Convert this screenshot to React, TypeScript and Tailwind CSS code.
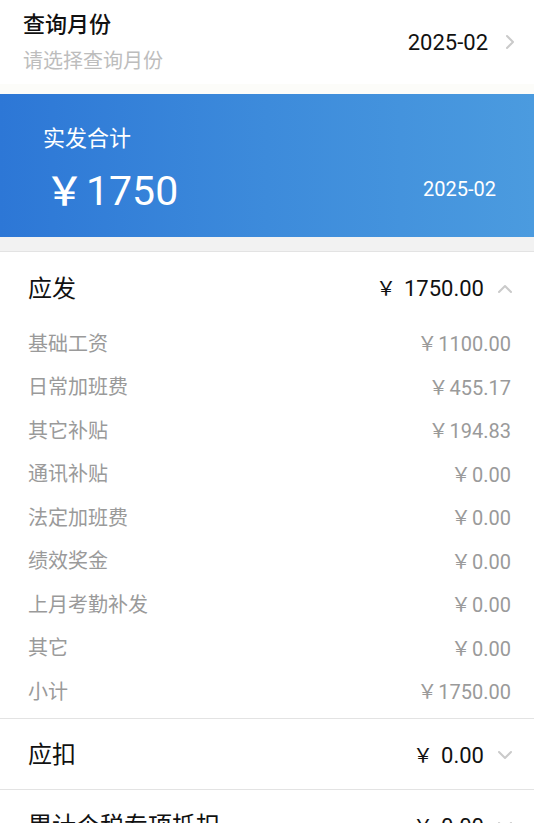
import React from "react";

const font = { fontFamily: "Roboto, 'Noto Sans CJK SC', 'Noto Sans', sans-serif" };

const earnings = [
  { label: "基础工资", value: "1100.00" },
  { label: "日常加班费", value: "455.17" },
  { label: "其它补贴", value: "194.83" },
  { label: "通讯补贴", value: "0.00" },
  { label: "法定加班费", value: "0.00" },
  { label: "绩效奖金", value: "0.00" },
  { label: "上月考勤补发", value: "0.00" },
  { label: "其它", value: "0.00" },
  { label: "小计", value: "1750.00" },
];

const yen = { fontFamily: "'Noto Sans CJK SC', sans-serif" };

function Chevron({ dir }: { dir: "right" | "up" | "down" }) {
  const pts =
    dir === "right" ? "5,2 11,8 5,14" : dir === "up" ? "2,11 8,5 14,11" : "2,5 8,11 14,5";
  return (
    <svg width="16" height="16" viewBox="0 0 16 16" className="shrink-0">
      <polyline points={pts} fill="none" stroke="#cacaca" strokeWidth="2" strokeLinecap="round" strokeLinejoin="round" />
    </svg>
  );
}

function SectionHead({ title, amount, open }: { title: string; amount: string; open: boolean }) {
  return (
    <div className="flex h-[70px] items-center justify-between pl-[28px] pr-[21px] pt-[3px]">
      <span className="text-[24px] text-[#111]">{title}</span>
      <div className="flex items-center gap-[13px]">
        <span className="text-[22px] text-[#111]">
          <span style={yen} className="mr-[8px] text-[20px]">￥</span>
          {amount}
        </span>
        <Chevron dir={open ? "up" : "down"} />
      </div>
    </div>
  );
}

export default function App() {
  return (
    <div className="h-[823px] w-[534px] overflow-hidden bg-white" style={font}>
      <div className="flex h-[84px] items-center justify-between pl-[23px] pr-[16px]">
        <div className="flex flex-col">
          <span className="text-[22px] font-medium leading-[30px] text-[#111]">查询月份</span>
          <span className="mt-[8px] text-[20px] leading-[26px] text-[#bdbdbd]">请选择查询月份</span>
        </div>
        <div className="flex items-center gap-[14px]">
          <span className="text-[22px] text-[#111]">2025-02</span>
          <Chevron dir="right" />
        </div>
      </div>
      <div className="h-[10px] bg-[#fcfcf9]" />

      <div className="flex h-[143px] items-end justify-between bg-gradient-to-r from-[#2d77d6] via-[#3d8bdb] to-[#4b9bdf] pb-[21px] pl-[43px] pr-[38px]">
        <div className="flex flex-col">
          <span className="text-[22px] leading-[30px] text-white">实发合计</span>
          <span className="mt-[9px] flex items-baseline text-[41px] leading-[50px] text-white">
            <span style={yen} className="ml-[2px] mr-[2px] text-[39px] font-medium">￥</span>1750
          </span>
        </div>
        <span className="mb-[12px] text-[20px] text-white">2025-02</span>
      </div>

      <div className="h-[15px] border-b border-[#e3e3e3] bg-[#f2f2f2]" />

      <SectionHead title="应发" amount="1750.00" open />
      <div className="pb-[4px]">
        {earnings.map((r) => (
          <div key={r.label} className="flex h-[43.5px] items-center justify-between pl-[28px] pr-[23px]">
            <span className="text-[20px] text-[#9a9a9a]">{r.label}</span>
            <span className="text-[20px] text-[#9a9a9a]">
              <span style={yen} className="mr-[1px] text-[20px]">￥</span>
              {r.value}
            </span>
          </div>
        ))}
      </div>

      <div className="border-t border-[#e3e3e3]">
        <SectionHead title="应扣" amount="0.00" open={false} />
      </div>
      <div className="border-t border-[#e3e3e3]">
        <SectionHead title="累计个税专项抵扣" amount="0.00" open={false} />
      </div>
    </div>
  );
}
